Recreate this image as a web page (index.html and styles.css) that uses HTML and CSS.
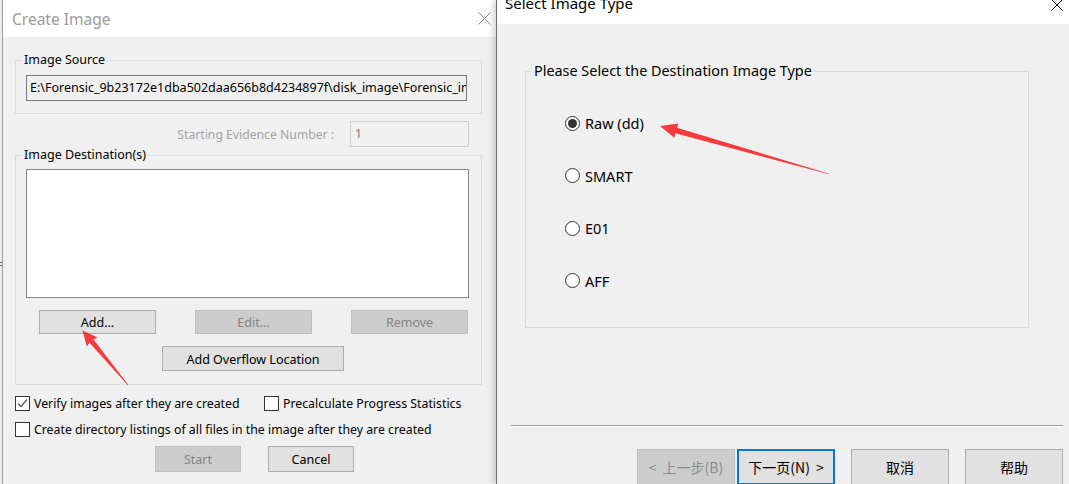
FILE: index.html
```html
<!DOCTYPE html>
<html>
<head>
<meta charset="utf-8">
<link rel="stylesheet" href="styles.css">
</head>
<body>
<div class="desk">
  <div class="edge-mark"></div>

  <section class="win win-create">
    <header class="titlebar tb-create">
      <span class="title">Create Image</span>
      <svg class="close" width="13" height="13" viewBox="0 0 13 13"><path d="M0.5 0.5 L12.5 12.5 M12.5 0.5 L0.5 12.5" stroke="#8a8a8a" stroke-width="1" fill="none"/></svg>
    </header>
    <div class="cbody">
      <fieldset class="group">
        <legend>Image Source</legend>
        <div class="gbody src-body">
          <div class="path">E:\Forensic_9b23172e1dba502daa656b8d4234897f\disk_image\Forensic_image.dd</div>
        </div>
      </fieldset>

      <div class="evrow">
        <span class="evlabel">Starting Evidence Number :</span>
        <div class="evinput">1</div>
      </div>

      <fieldset class="group">
        <legend>Image Destination(s)</legend>
        <div class="gbody dest-body">
          <div class="listbox"></div>
          <div class="btnrow">
            <div class="btn b117">Add...</div>
            <div class="btn b117 dis">Edit...</div>
            <div class="btn b117 dis">Remove</div>
          </div>
          <div class="btn overflow">Add Overflow Location</div>
        </div>
      </fieldset>

      <div class="checks">
        <div class="chk"><span class="box"><svg width="13" height="13" viewBox="0 0 13 13"><path d="M2 6.5 L5 9.5 L11 2.5" stroke="#555" stroke-width="1.3" fill="none"/></svg></span>Verify images after they are created</div>
        <div class="chk"><span class="box"></span>Precalculate Progress Statistics</div>
        <div class="chk wide"><span class="box"></span>Create directory listings of all files in the image after they are created</div>
      </div>

      <div class="actrow">
        <div class="btn b86 dis">Start</div>
        <div class="btn b86">Cancel</div>
      </div>
    </div>
  </section>

  <section class="win win-type">
    <header class="titlebar tb-type">
      <span class="title">Select Image Type</span>
      <svg class="close" width="12" height="12" viewBox="0 0 12 12"><path d="M0.5 0.5 L11.5 11.5 M11.5 0.5 L0.5 11.5" stroke="#000" stroke-width="1" fill="none"/></svg>
    </header>
    <div class="tbody">
      <fieldset class="group tgroup">
        <legend>Please Select the Destination Image Type</legend>
        <div class="gbody radios">
          <div class="radio"><span class="dot on"></span>Raw (dd)</div>
          <div class="radio"><span class="dot"></span>SMART</div>
          <div class="radio"><span class="dot"></span>E01</div>
          <div class="radio"><span class="dot"></span>AFF</div>
        </div>
      </fieldset>
    </div>
    <div class="tfoot">
      <div class="sep"></div>
      <div class="wizrow">
        <div class="wbtn dis">&lt;<span class="sp"></span>上一步(B)</div>
        <div class="wbtn def">下一页(N)<span class="sp"></span>&gt;</div>
        <div class="wbtn gap">取消</div>
        <div class="wbtn gap">帮助</div>
      </div>
    </div>
  </section>

  <svg class="arrows" width="1069" height="484" viewBox="0 0 1069 484">
    <polygon fill="#f53b3b" transform="translate(829 174) rotate(195.86)" points="0,-0.3 159,-2.8 158.5,-7.5 175.7,0 158.5,7.5 159,2.8 0,0.3"/>
    <polygon fill="#f53b3b" transform="translate(128 385) rotate(230.2)" points="0,-0.3 57,-2.6 56,-7 71,0 56,7 57,2.6 0,0.3"/>
  </svg>
</div>
</body>
</html>
```

FILE: styles.css
```css
* { box-sizing: border-box; }

body {
  margin: 0;
  width: 1069px;
  height: 484px;
  overflow: hidden;
  background: #ececec;
  font-family: "Noto Sans", "Noto Sans CJK SC", sans-serif;
  font-size: 12px;
  color: #000;
}

.desk {
  position: relative;
  width: 1069px;
  height: 484px;
}

.edge-mark {
  position: absolute;
  left: 0;
  top: 262px;
  width: 2px;
  height: 4px;
  border-top: 1px solid #666;
  border-bottom: 1px solid #666;
}

.win {
  position: absolute;
  top: 0;
  height: 484px;
  background: #f0f0f0;
  display: flex;
  flex-direction: column;
}

.win-create {
  left: 2px;
  width: 494px;
  border-left: 1px solid #9d9d9d;
  z-index: 1;
}

.win-type {
  left: 496px;
  width: 573px;
  border-left: 1px solid #6b6b6b;
  box-shadow: -3px 0 6px rgba(0, 0, 0, 0.16);
  z-index: 2;
}

.titlebar {
  background: #fff;
  display: flex;
  justify-content: space-between;
  flex-shrink: 0;
}

.tb-create {
  height: 37px;
  align-items: center;
  padding: 0 5px 0 9px;
}

.tb-create .title {
  font-size: 15.5px;
  color: #9b9b9b;
}

.tb-type {
  height: 24px;
  align-items: flex-start;
  padding: 0 6px 0 8px;
}

.tb-type .title {
  font-size: 15px;
  line-height: 15px;
  margin-top: -4px;
  color: #000;
}

.tb-type .close {
  margin-top: -1px;
}

/* group boxes */
.group {
  margin: 0;
  padding: 0;
  border: 1px solid #dcdcdc;
  min-width: 0;
}

.group legend {
  padding: 0 2px;
  margin-left: 6px;
  line-height: 16px;
  font-size: 12.5px;
}

.cbody {
  padding: 15px 14px 0 12px;
}

.src-body {
  padding: 7px 13px 12px 10px;
}

.path {
  width: 441px;
  height: 26px;
  border: 1px solid #7a7a7a;
  background: #f0f0f0;
  padding-left: 3px;
  line-height: 24px;
  white-space: nowrap;
  overflow: hidden;
  font-size: 12.5px;
}

.evrow {
  display: flex;
  justify-content: flex-end;
  align-items: center;
  gap: 16px;
  margin-top: 7px;
  padding-right: 13px;
}

.evlabel {
  color: #a3a3a3;
  font-size: 12.2px;
}

.evinput {
  width: 119px;
  height: 26px;
  border: 1px solid #cfcfcf;
  background: #f0f0f0;
  color: #7a7a7a;
  padding-left: 4px;
  line-height: 24px;
}

.dest-body {
  padding: 6px 0 13px 10px;
}

.listbox {
  width: 443px;
  height: 129px;
  border: 1px solid #828790;
  background: #fff;
}

.btn {
  height: 24px;
  border: 1px solid #adadad;
  background: #e1e1e1;
  display: flex;
  align-items: center;
  justify-content: center;
  font-size: 12.5px;
}

.btn.dis {
  background: #cccccc;
  border-color: #bfbfbf;
  color: #858585;
}

.btnrow {
  display: flex;
  gap: 39px;
  margin-top: 12px;
  padding-left: 13px;
}

.b117 { width: 117px; }

.overflow {
  width: 182px;
  height: 25px;
  margin: 12px 0 0 136px;
  padding-top: 1px;
}

.checks {
  display: grid;
  grid-template-columns: 249px auto;
  row-gap: 11px;
  margin-top: 11px;
}

.chk {
  display: flex;
  align-items: center;
  gap: 4px;
  height: 15px;
  font-size: 12.3px;
  white-space: nowrap;
}

.chk.wide {
  grid-column: 1 / 3;
}

.box {
  width: 15px;
  height: 15px;
  border: 1px solid #333;
  background: #fff;
  display: flex;
  align-items: center;
  justify-content: center;
  flex-shrink: 0;
}

.actrow {
  display: flex;
  gap: 27px;
  margin-top: 9px;
  padding-left: 140px;
}

.b86 {
  width: 86px;
  height: 26px;
}

/* right dialog */
.tbody {
  padding: 38px 40px 0 28px;
}

.tgroup legend {
  font-size: 14.4px;
  line-height: 18px;
}

.radios {
  display: flex;
  flex-direction: column;
  gap: 34.5px;
  padding: 34px 0 37px 39px;
}

.radio {
  display: flex;
  align-items: center;
  gap: 5px;
  height: 18px;
  font-size: 14.5px;
}

.dot {
  width: 15px;
  height: 15px;
  border: 1px solid #333;
  border-radius: 50%;
  background: #fff;
  display: flex;
  align-items: center;
  justify-content: center;
  flex-shrink: 0;
}

.dot.on::after {
  content: "";
  width: 9px;
  height: 9px;
  border-radius: 50%;
  background: #333;
}

.tfoot {
  padding: 0 6px 0 14px;
}

.sep {
  margin-top: 97px;
  height: 2px;
  border-top: 1px solid #a0a0a0;
  border-bottom: 1px solid #fff;
}

.wizrow {
  display: flex;
  justify-content: flex-end;
  gap: 2px;
  margin-top: 22px;
}

.wbtn {
  width: 98px;
  height: 36px;
  border: 1px solid #adadad;
  background: #e1e1e1;
  display: flex;
  align-items: center;
  justify-content: center;
  font-size: 14px;
  font-family: "Noto Sans CJK SC", "Noto Sans", sans-serif;
}

.wbtn .sp {
  display: inline-block;
  width: 6px;
}

.wbtn.dis {
  background: #cccccc;
  border-color: #bfbfbf;
  color: #8b8b8b;
}

.wbtn.def {
  border: 2px solid #0078d7;
}

.wbtn.gap {
  margin-left: 14px;
}

.arrows {
  position: absolute;
  left: 0;
  top: 0;
  z-index: 5;
  pointer-events: none;
}
```
